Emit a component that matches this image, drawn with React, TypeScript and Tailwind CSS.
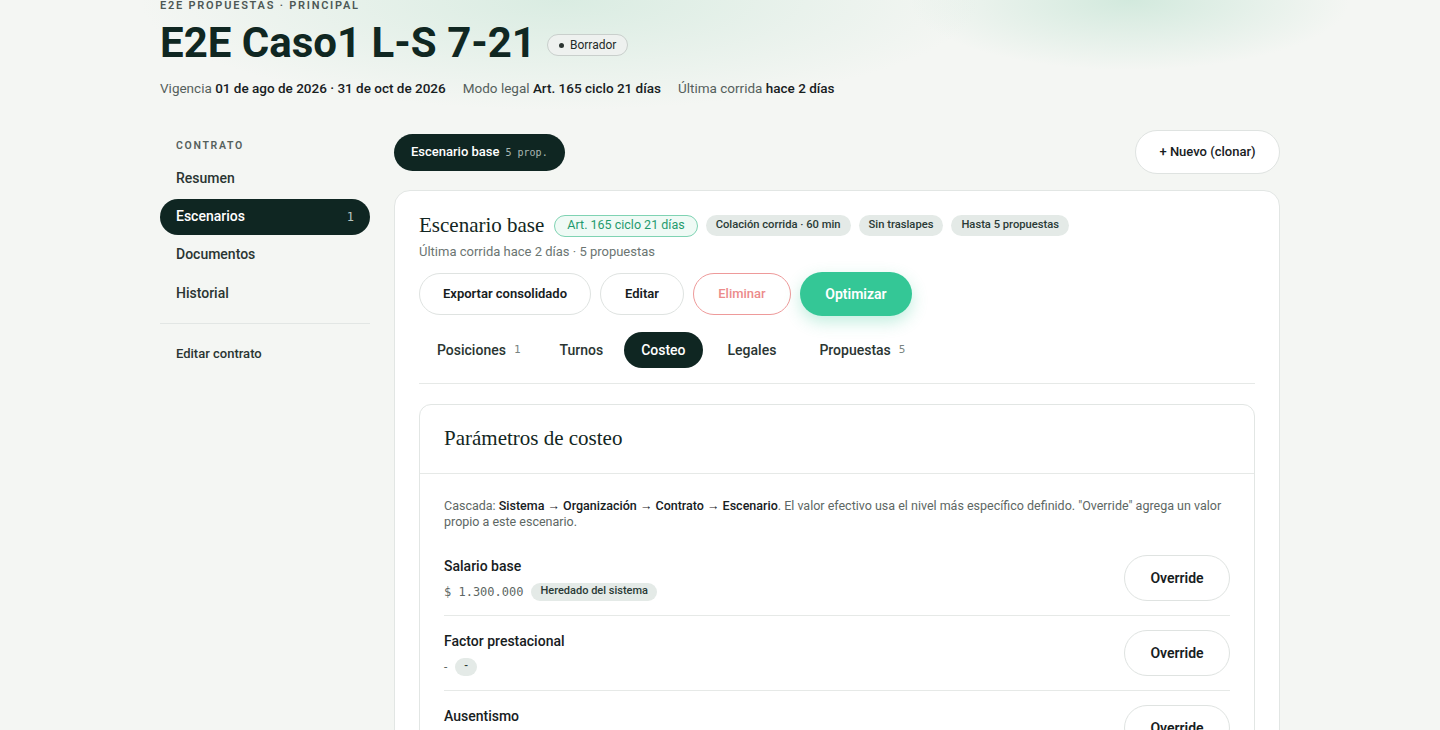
import React from "react";

const sans = { fontFamily: "Roboto, 'Noto Sans', sans-serif" };
const mono = "'DejaVu Sans Mono', 'Liberation Mono', monospace";
const serif = "'Liberation Serif', 'DejaVu Serif', serif";

function Badge({ children, green }: { children: React.ReactNode; green?: boolean }) {
  return green ? (
    <span className="inline-flex h-[22px] items-center rounded-full border border-[#7fd3b3] bg-[#effaf5] px-[12px] text-[12.5px] text-[#1f9a6e]">
      {children}
    </span>
  ) : (
    <span className="inline-flex h-[21px] items-center rounded-full bg-[#e4eae7] px-[10px] text-[11.2px] font-medium text-[#2a3a36]">
      {children}
    </span>
  );
}

function Row({ label, value, badge, isMono, last }: { label: string; value: string; badge: string; isMono?: boolean; last?: boolean }) {
  return (
    <div className={`flex items-center justify-between py-[14px] ${last ? "" : "border-b border-[#e6e9e7]"}`}>
      <div className="flex flex-col gap-[6px]">
        <div className="text-[14px] font-medium text-[#17201e]">{label}</div>
        <div className="flex items-center gap-[8px]">
          <span className="text-[12px] text-[#5d6764]" style={isMono ? { fontFamily: mono } : undefined}>
            {value}
          </span>
          <span className="inline-flex h-[18px] items-center rounded-full bg-[#e4eae7] px-[9px] text-[11px] font-medium text-[#2a3a36]">
            {badge}
          </span>
        </div>
      </div>
      <button className="h-[46px] w-[106px] rounded-full border border-[#dfe3e1] bg-white text-[14px] font-semibold text-[#17201e]">
        Override
      </button>
    </div>
  );
}

export default function App() {
  return (
    <div
      className="min-h-[730px] w-full overflow-hidden bg-[#f4f6f3] bg-[image:radial-gradient(420px_110px_at_560px_0px,rgba(196,228,212,0.55),transparent),radial-gradient(220px_70px_at_1130px_0px,rgba(196,228,212,0.7),transparent)] text-[#122622]"
      style={sans}
    >
      <div className="mx-auto w-[1120px]">
        <div>
          <div className="text-[11px] font-semibold uppercase leading-[11px] tracking-[0.16em] text-[#4d5855]">
            E2E Propuestas · Principal
          </div>
          <div className="mt-[6px] flex items-center gap-[11px]">
            <h1 className="text-[42px] font-bold leading-[52px] text-[#102722]">E2E Caso1 L-S 7-21</h1>
            <span className="mt-[4px] inline-flex h-[22px] items-center gap-[6px] rounded-full border border-[#c9cfcc] bg-[#eef1ef] px-[11px] text-[12px] text-[#1f2b28]">
              <span className="h-[5px] w-[5px] rounded-full bg-[#2b3431]" />
              Borrador
            </span>
          </div>
          <div className="mt-[9px] flex h-[20px] items-center gap-[17px] text-[13.5px] text-[#55605c]">
            <span>
              Vigencia <span className="font-medium text-[#17201e]">01 de ago de 2026 · 31 de oct de 2026</span>
            </span>
            <span>
              Modo legal <span className="font-medium text-[#17201e]">Art. 165 ciclo 21 días</span>
            </span>
            <span>
              Última corrida <span className="font-medium text-[#17201e]">hace 2 días</span>
            </span>
          </div>
        </div>

        <div className="mt-[32px] flex gap-[24px]">
          <aside className="w-[210px] shrink-0 pt-[8px]">
            <div className="px-[16px] text-[10.5px] font-semibold uppercase tracking-[0.16em] text-[#55605c]">Contrato</div>
            <nav className="mt-[7px] flex flex-col gap-[2px] text-[14px] font-medium text-[#2a3532]">
              <div className="flex h-[36px] items-center px-[16px]">Resumen</div>
              <div className="flex h-[36px] items-center justify-between rounded-full bg-[#0f2622] px-[16px] text-white">
                <span>Escenarios</span>
                <span className="text-[12px] text-[#b9c6c2]" style={{ fontFamily: mono }}>1</span>
              </div>
              <div className="flex h-[36px] items-center px-[16px]">Documentos</div>
              <div className="flex h-[38px] items-center px-[16px]">Historial</div>
            </nav>
            <div className="mt-[10px] border-t border-[#e2e6e4]" />
            <div className="mt-[12px] flex h-[36px] items-center px-[16px] text-[13px] font-medium text-[#2a3532]">Editar contrato</div>
          </aside>

          <main className="flex-1">
            <div className="flex items-center justify-between">
              <div className="flex h-[37px] items-center gap-[6px] rounded-full bg-[#0f2622] px-[17px] text-[13px] font-medium text-white">
                Escenario base
                <span className="text-[10px] text-[#a9b7b3]" style={{ fontFamily: mono }}>
                  5 prop.
                </span>
              </div>
              <button className="h-[44px] w-[145px] rounded-full border border-[#dfe3e1] bg-white text-[13px] font-medium text-[#17201e]">
                + Nuevo (clonar)
              </button>
            </div>

            <section className="mt-[16px] rounded-[16px] border border-[#e2e6e4] bg-white px-[24px] pt-[19px]">
              <div className="flex items-center gap-[8px]">
                <h2 className="mr-[2px] text-[#122622]" style={{ fontFamily: serif, fontSize: 21 }}>
                  Escenario base
                </h2>
                <Badge green>Art. 165 ciclo 21 días</Badge>
                <Badge>Colación corrida · 60 min</Badge>
                <Badge>Sin traslapes</Badge>
                <Badge>Hasta 5 propuestas</Badge>
              </div>
              <div className="text-[13px] text-[#6b7572]">Última corrida hace 2 días · 5 propuestas</div>

              <div className="mt-[11px] flex items-center gap-[9px] text-[13px] font-semibold">
                <button className="h-[42px] w-[172px] rounded-full border border-[#dfe3e1] bg-white text-[#17201e]">Exportar consolidado</button>
                <button className="h-[42px] w-[84px] rounded-full border border-[#dfe3e1] bg-white text-[#17201e]">Editar</button>
                <button className="h-[42px] w-[98px] rounded-full border border-[#ee9a9a] bg-white font-medium text-[#ec8b8b]">Eliminar</button>
                <button className="h-[44px] w-[112px] rounded-full bg-[#34c796] text-[14px] text-white shadow-[0_6px_16px_rgba(52,199,150,0.3)]">
                  Optimizar
                </button>
              </div>

              <div className="mt-[16px] flex items-center gap-[4px] border-b border-[#e6e9e7] pb-[15px] text-[14px] font-medium text-[#2a3532]">
                <div className="flex h-[36px] items-center gap-[8px] px-[18px]">
                  Posiciones <span className="text-[11px] text-[#7a8481]" style={{ fontFamily: mono }}>1</span>
                </div>
                <div className="flex h-[36px] items-center px-[17px]">Turnos</div>
                <div className="flex h-[36px] items-center rounded-full bg-[#0f2622] px-[17px] text-white">Costeo</div>
                <div className="flex h-[36px] items-center px-[21px]">Legales</div>
                <div className="flex h-[36px] items-center gap-[8px] px-[18px]">
                  Propuestas <span className="text-[11px] text-[#7a8481]" style={{ fontFamily: mono }}>5</span>
                </div>
              </div>

              <div className="mt-[20px] rounded-[12px] border border-[#e2e6e4]">
                <div className="flex h-[69px] items-center border-b border-[#e6e9e7] px-[24px]">
                  <h3 className="text-[#122622]" style={{ fontFamily: serif, fontSize: 21 }}>
                    Parámetros de costeo
                  </h3>
                </div>
                <div className="px-[24px] pt-[24px]">
                  <p className="text-[12.5px] leading-[16px] text-[#5d6764]">
                    Cascada: <span className="font-medium text-[#17201e]">Sistema → Organización → Contrato → Escenario</span>. El valor efectivo usa el nivel más específico definido. "Override" agrega un valor propio a este escenario.
                  </p>
                  <div className="mt-[11px]">
                    <Row label="Salario base" value="$ 1.300.000" badge="Heredado del sistema" isMono />
                    <Row label="Factor prestacional" value="-" badge="-" />
                    <Row label="Ausentismo" value="-" badge="-" last />
                  </div>
                </div>
              </div>
            </section>
          </main>
        </div>
      </div>
    </div>
  );
}
